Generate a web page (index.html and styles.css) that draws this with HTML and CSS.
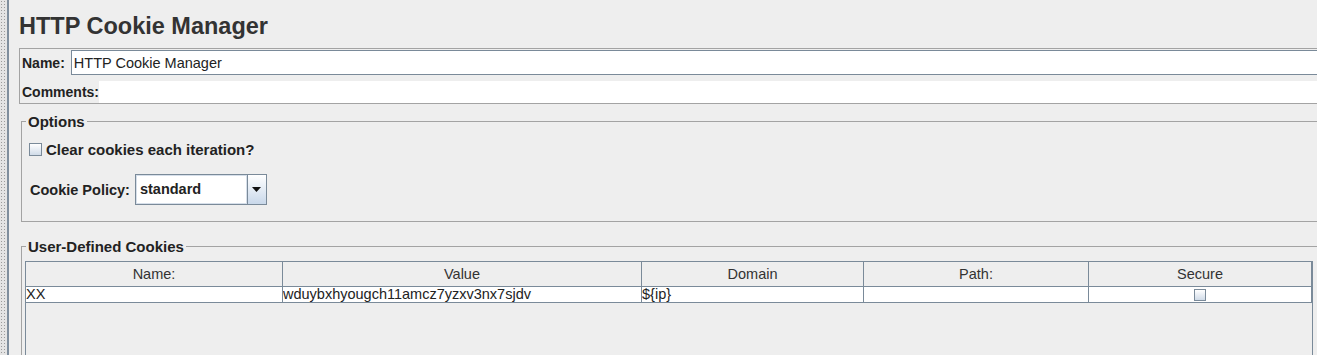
FILE: index.html
```html
<!DOCTYPE html>
<html lang="en">
<head>
    <meta charset="UTF-8">
    <meta name="viewport" content="width=device-width, initial-scale=1.0">
    <title>HTTP Cookie Manager</title>
    <link rel="stylesheet" href="styles.css">
</head>
<body>

<div class="workspace">
    <!-- tree / editor divider -->
    <div class="splitter"></div>

    <main class="editor">
        <h1 class="editor-title">HTTP Cookie Manager</h1>

        <div class="name-panel">
            <div class="field-row">
                <label class="field-label" for="elementName">Name:</label>
                <input class="text-field" id="elementName" type="text" value="HTTP Cookie Manager">
            </div>
            <div class="field-row comments-row">
                <label class="field-label">Comments:</label>
                <div class="text-area"></div>
            </div>
        </div>

        <fieldset class="group options-group">
            <legend>Options</legend>
            <label class="check-row">
                <span class="checkbox"></span>
                Clear cookies each iteration?
            </label>
            <div class="policy-row">
                <span class="policy-label">Cookie Policy:</span>
                <div class="combo">
                    <span class="combo-value">standard</span>
                    <span class="combo-button">
                        <svg width="9" height="5" viewBox="0 0 9 5"><path d="M0 0H9L4.5 5Z" fill="#111"/></svg>
                    </span>
                </div>
            </div>
        </fieldset>

        <fieldset class="group cookies-group">
            <legend>User-Defined Cookies</legend>
            <div class="table-pane">
                <table class="cookie-table">
                    <colgroup>
                        <col class="col-name">
                        <col class="col-value">
                        <col class="col-domain">
                        <col class="col-path">
                        <col class="col-secure">
                    </colgroup>
                    <thead>
                        <tr>
                            <th>Name:</th>
                            <th>Value</th>
                            <th>Domain</th>
                            <th>Path:</th>
                            <th>Secure</th>
                        </tr>
                    </thead>
                    <tbody>
                        <tr>
                            <td>XX</td>
                            <td>wduybxhyougch11amcz7yzxv3nx7sjdv</td>
                            <td>${ip}</td>
                            <td></td>
                            <td class="cell-check"><span class="checkbox small"></span></td>
                        </tr>
                    </tbody>
                </table>
            </div>
        </fieldset>
    </main>
</div>

</body>
</html>
```

FILE: styles.css
```css
body {
    margin: 0;
    background-color: #eeeeee;
    font-family: "Liberation Sans", Arial, sans-serif;
    color: #333;
}

.workspace {
    display: flex;
    height: 355px;
    overflow: hidden;
}

/* dotted grip of the split pane */
.splitter {
    width: 7px;
    flex-shrink: 0;
    background-color: #e4e4e4;
    background-image: radial-gradient(circle, #9b9b9b 0.6px, transparent 0.8px);
    background-size: 3px 3px;
    border-right: 2px solid #7f8e9d;
}

.editor {
    flex: 1;
    min-width: 0;
    padding-left: 10px;
    overflow: hidden;
}

.editor-title {
    margin: 12px 0 8px 0;
    font-size: 23.5px;
    line-height: 28px;
    font-weight: bold;
    color: #333;
}

/* name + comments box */
.name-panel {
    border: 1px solid #a3a3a3;
    margin-right: -30px;
    padding: 1px 0 0 2px;
}

.field-row {
    display: flex;
    align-items: center;
    height: 25px;
}

.comments-row {
    margin-top: 6px;
    height: 22px;
}

.field-label {
    font-size: 14px;
    font-weight: bold;
    color: #222;
}

.field-row .field-label {
    margin-right: 6px;
}

.comments-row .field-label {
    margin-right: 0;
}

.text-field {
    flex: 1;
    box-sizing: border-box;
    height: 25px;
    margin: 0;
    padding: 0 2px;
    border: 1px solid #7a8a99;
    background: #fff;
    font-family: "Liberation Sans", Arial, sans-serif;
    font-size: 14.5px;
    color: #222;
    outline: none;
}

.text-area {
    flex: 1;
    height: 22px;
    background: #fff;
}

/* titled borders */
.group {
    border: 1px solid #a3a3a3;
    margin: 0 -30px 0 2px;
    padding: 0;
    min-width: 0;
}

.group legend {
    margin-left: 4px;
    padding: 0 2px;
    font-size: 15px;
    line-height: 17px;
    font-weight: bold;
    color: #222;
}

.options-group {
    margin-top: 9px;
    padding-bottom: 16px;
}

.check-row {
    display: flex;
    align-items: center;
    gap: 4px;
    margin: 11px 0 0 7px;
    font-size: 15px;
    line-height: 17px;
    font-weight: bold;
    color: #222;
}

.checkbox {
    display: inline-block;
    box-sizing: border-box;
    width: 13px;
    height: 13px;
    border: 1px solid #7a8a99;
    background: linear-gradient(#ffffff, #d0dbe8);
}

.checkbox.small {
    width: 12px;
    height: 12px;
}

.policy-row {
    display: flex;
    align-items: center;
    gap: 5px;
    margin: 16px 0 0 8px;
}

.policy-label {
    font-size: 14.5px;
    font-weight: bold;
    color: #222;
}

.combo {
    display: flex;
    box-sizing: border-box;
    width: 132px;
    height: 31px;
    border: 1px solid #7a8a99;
    background: #fff;
}

.combo-value {
    flex: 1;
    padding-left: 3px;
    border: 1px solid #d6dfea;
    line-height: 27px;
    font-size: 14.5px;
    font-weight: bold;
    color: #222;
}

.combo-button {
    display: flex;
    align-items: center;
    justify-content: center;
    width: 18px;
    border-left: 1px solid #7a8a99;
    background: linear-gradient(#ffffff, #c9d8ea);
}

.cookies-group {
    margin-top: 16px;
    padding-top: 6px;
}

.table-pane {
    width: 1286px;
    height: 120px;
    margin-left: 3px;
    border-left: 1px solid #7a8a99;
    border-right: 1px solid #7a8a99;
}

.cookie-table {
    table-layout: fixed;
    width: 1286px;
    border-collapse: separate;
    border-spacing: 0;
    border-top: 1px solid #7a8a99;
    font-size: 14.5px;
    color: #222;
}

.col-name { width: 257px; }
.col-value { width: 359px; }
.col-domain { width: 222px; }
.col-path { width: 225px; }
.col-secure { width: 223px; }

.cookie-table th,
.cookie-table td {
    padding: 0;
    border-right: 1px solid #7a8a99;
    border-bottom: 1px solid #7a8a99;
    white-space: nowrap;
    overflow: hidden;
}

.cookie-table th {
    height: 24px;
    font-weight: normal;
    text-align: center;
    color: #333;
    background: #eeeeee;
}

.cookie-table td {
    height: 15px;
    line-height: 15px;
    background: #fff;
    text-align: left;
}

.cookie-table .cell-check {
    text-align: center;
}

.cell-check .checkbox {
    vertical-align: top;
    margin-top: 2px;
}
```
